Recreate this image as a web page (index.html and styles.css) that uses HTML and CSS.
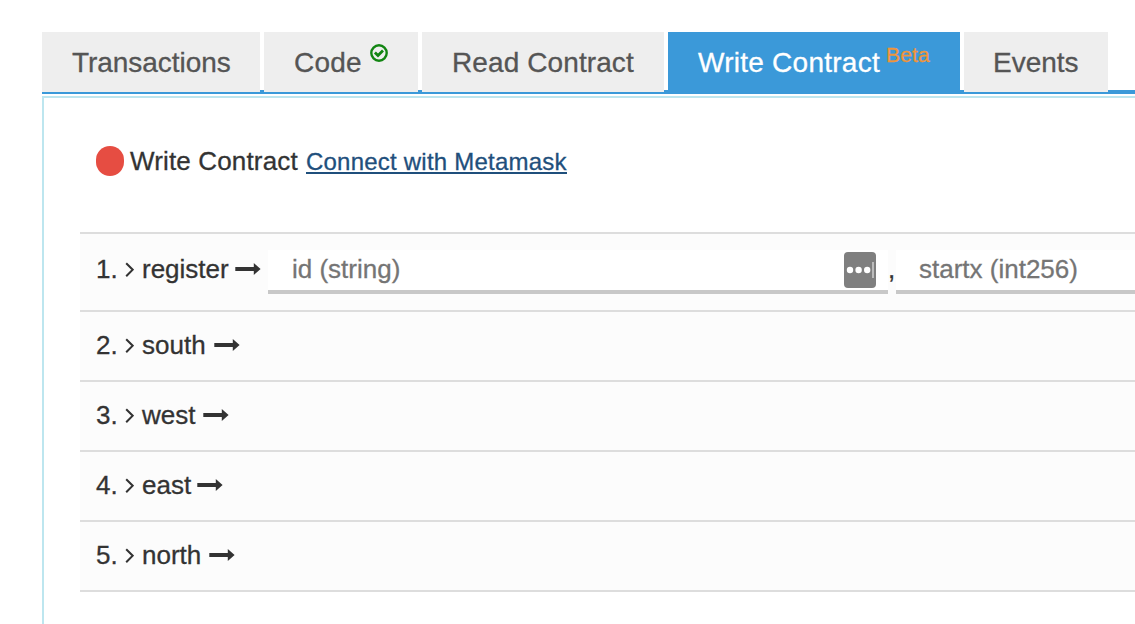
FILE: index.html
```html
<!DOCTYPE html>
<html lang="en">
<head>
<meta charset="utf-8">
<title>Write Contract</title>
<link rel="stylesheet" href="styles.css">
</head>
<body>
<svg class="defs" width="0" height="0">
  <symbol id="chevron" viewBox="0 0 9 16"><path d="M1.2 1.2 7.7 7.7 1.2 14.2" fill="none" stroke="#333" stroke-width="2"/></symbol>
  <symbol id="arrow" viewBox="0 0 26 12"><path d="M.3 4.1H18.8V0L25.6 6 18.8 12V7.9H.3Z" fill="#333"/></symbol>
</svg>
<nav class="tabs">
  <a class="tab transactions">Transactions</a>
  <a class="tab code">Code<svg class="check" viewBox="0 0 18 18"><circle cx="9" cy="9" r="7.7" fill="none" stroke="#128512" stroke-width="2.4"/><path d="m4.9 8.4 3.1 3.1 5-5" fill="none" stroke="#128512" stroke-width="2.8"/></svg></a>
  <a class="tab read">Read Contract</a>
  <a class="tab write active">Write Contract<span class="beta">Beta</span></a>
  <a class="tab events">Events</a>
</nav>
<main class="panel">
  <header class="status"><i class="dot"></i><span class="title">Write Contract</span><a class="connect">Connect with Metamask</a></header>
  <section class="methods">
    <div class="method with-inputs">
      <span class="num">1.</span><svg class="chevron"><use href="#chevron"/></svg><span class="name register">register</span><svg class="arrow"><use href="#arrow"/></svg>
      <div class="field id-field"><span class="hint">id (string)</span><svg class="autofill" viewBox="0 0 32 36"><rect width="32" height="36" rx="4" fill="#7f7f7f"/><g fill="#fff"><circle cx="6" cy="18" r="3.2"/><circle cx="14.6" cy="18" r="3.2"/><circle cx="23.2" cy="18" r="3.2"/></g><path d="M29 10v16" stroke="#ddd" stroke-width="1.3"/></svg></div>
      <span class="comma">,</span>
      <div class="field startx-field"><span class="hint">startx (int256)</span></div>
    </div>
    <div class="method"><span class="num">2.</span><svg class="chevron"><use href="#chevron"/></svg><span class="name south">south</span><svg class="arrow"><use href="#arrow"/></svg></div>
    <div class="method"><span class="num">3.</span><svg class="chevron"><use href="#chevron"/></svg><span class="name west">west</span><svg class="arrow"><use href="#arrow"/></svg></div>
    <div class="method"><span class="num">4.</span><svg class="chevron"><use href="#chevron"/></svg><span class="name east">east</span><svg class="arrow"><use href="#arrow"/></svg></div>
    <div class="method"><span class="num">5.</span><svg class="chevron"><use href="#chevron"/></svg><span class="name north">north</span><svg class="arrow"><use href="#arrow"/></svg></div>
  </section>
</main>
</body>
</html>
```
FILE: styles.css
```css
* { box-sizing: border-box; }
body { margin: 0; height: 624px; overflow: hidden; background: #fff; color: #333; font: 26px/30px "Liberation Sans", Arial, sans-serif; white-space: nowrap; -webkit-text-stroke: .3px; }
svg { display: block; flex: none; }
.defs { position: absolute; }
.tabs { display: flex; gap: 4px; height: 62px; margin: 32px 0 0 42px; background: linear-gradient(#3b99d9, #3b99d9) 0 58px / 100% 4px no-repeat; }
.tab { display: flex; flex: none; height: 62px; padding-left: 30px; background: #eee; border-bottom: 2px solid #3b99d9; color: #555; font-size: 28px; line-height: 61px; }
.transactions { width: 218px; letter-spacing: -.05px; }
.code { width: 154px; letter-spacing: .25px; }
.read { width: 242px; letter-spacing: .1px; }
.write { width: 292px; letter-spacing: .25px; }
.events { width: 144px; padding-left: 29px; }
.active { background: #3b99d9; color: #fff; }
.check { width: 18px; height: 18px; margin: 12px 0 0 8px; }
.beta { margin-left: 6px; color: #f0953a; font-size: 21px; line-height: 46px; letter-spacing: .2px; }
.panel { height: 528px; margin: 2px 0 0 42px; border: solid #bde6ef; border-width: 2px 0 0 2px; padding: 46px 0 0 36px; }
.status { display: flex; align-items: center; height: 34px; padding-left: 16px; }
.dot { width: 28px; height: 30px; border-radius: 14px; background: #e64d42; }
.title { width: 176px; margin-left: 6px; letter-spacing: .15px; }
.connect { color: #1f4f7c; font-size: 24px; letter-spacing: .22px; line-height: 25px; border-bottom: 2px solid #1f4f7c; height: 25px; }
.methods { margin-top: 54px; border-top: 2px solid #ddd; }
.method { display: flex; align-items: flex-start; height: 70px; padding: 18px 0 0 16px; background: #fcfcfc; border-bottom: 2px solid #ddd; }
.with-inputs { height: 78px; padding-top: 20px; }
.num { flex: none; width: 29px; }
.chevron { width: 9px; height: 16px; margin-top: 8px; }
.name { flex: none; margin-left: 8px; }
.register { width: 93px; }
.south { width: 72px; }
.west { width: 61px; }
.east { width: 55px; }
.north { width: 67px; }
.arrow { width: 26px; height: 12px; margin-top: 9px; }
.field { display: flex; flex: none; height: 44px; margin-top: -4px; padding: 4px 0 0 24px; background: #fff; border-bottom: 4px solid #c8c8c8; color: #757575; }
.id-field { justify-content: space-between; width: 620px; margin-left: 7px; padding-right: 12px; }
.startx-field { flex: 1 1 0; min-width: 0; padding-left: 23px; }
.autofill { width: 32px; height: 36px; margin-top: -2px; }
.comma { width: 8px; flex: none; }
```
